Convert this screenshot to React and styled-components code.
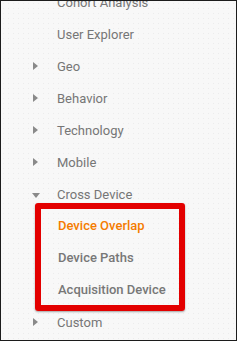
import React from 'react';
import styled, { createGlobalStyle, css } from 'styled-components';

const GlobalStyle = createGlobalStyle`
    html, body {
        margin: 0;
        padding: 0;
    }
    body {
        font-family: Roboto, "Liberation Sans", sans-serif;
    }
`;

const Frame = styled.div`
    box-sizing: border-box;
    width: 237px;
    height: 341px;
    border: 1px solid #1c1c1c;
    background-color: #f8f8f8;
    background-image: radial-gradient(#ececec 0.6px, transparent 0.8px);
    background-size: 5px 5px;
    overflow: hidden;
`;

const Menu = styled.ul`
    list-style: none;
    margin: -15px 0 0;
    padding: 0;
`;

const Row = styled.li`
    height: 32px;
    display: flex;
    align-items: center;
    padding-left: 31px;
    font-size: 13px;
    color: #767676;
    white-space: nowrap;
    ${({ sub }) => sub && css`
        padding-left: 17px;
        font-weight: 500;
        color: #777777;
    `};
    ${({ active }) => active && css`
        color: #f57c00;
    `};
`;

const Arrow = styled.span`
    width: 25px;
    flex: 0 0 25px;
    display: flex;
    align-items: center;
    visibility: ${({ hidden }) => hidden ? 'hidden' : 'visible'};
    &::before {
        content: '';
        display: block;
        ${({ open }) => open ? css`
            border-left: 4px solid transparent;
            border-right: 4px solid transparent;
            border-top: 5px solid #8a8a8a;
            margin-top: 2px;
        ` : css`
            border-top: 4px solid transparent;
            border-bottom: 4px solid transparent;
            border-left: 5px solid #8a8a8a;
            margin-left: 1px;
        `}
    }
`;

const Beta = styled.span`
    color: #f57c00;
    font-size: 10px;
    font-weight: 700;
    margin-left: 4px;
    align-self: flex-start;
    margin-top: 3px;
`;

const Highlight = styled.li`
    list-style: none;
    box-sizing: border-box;
    width: 150px;
    margin: -7px 0 -5px 34px;
    border: 6px solid #e30000;
    border-radius: 3px;
    box-shadow: 0 1px 2px rgba(0, 0, 0, 0.35);
    ul {
        list-style: none;
        margin: 0;
        padding: 0;
    }
`;

const items = [
    { label: 'User Explorer' },
    { label: 'Geo', arrow: true },
    { label: 'Behavior', arrow: true },
    { label: 'Technology', arrow: true },
    { label: 'Mobile', arrow: true },
];

const crossDevice = ['Device Overlap', 'Device Paths', 'Acquisition Device'];

export default function App() {
    return (
        <Frame>
            <GlobalStyle />
            <Menu>
                <Row>
                    <Arrow hidden />
                    Cohort Analysis
                    <Beta>BETA</Beta>
                </Row>
                {items.map((item) =>
                    <Row key={item.label}>
                        <Arrow hidden={!item.arrow} />
                        {item.label}
                    </Row>
                )}
                <Row>
                    <Arrow open />
                    Cross Device
                </Row>
                <Highlight>
                    <ul>
                        {crossDevice.map((label, i) =>
                            <Row sub active={i === 0} key={label}>{label}</Row>
                        )}
                    </ul>
                </Highlight>
                <Row>
                    <Arrow />
                    Custom
                </Row>
            </Menu>
        </Frame>
    );
}
